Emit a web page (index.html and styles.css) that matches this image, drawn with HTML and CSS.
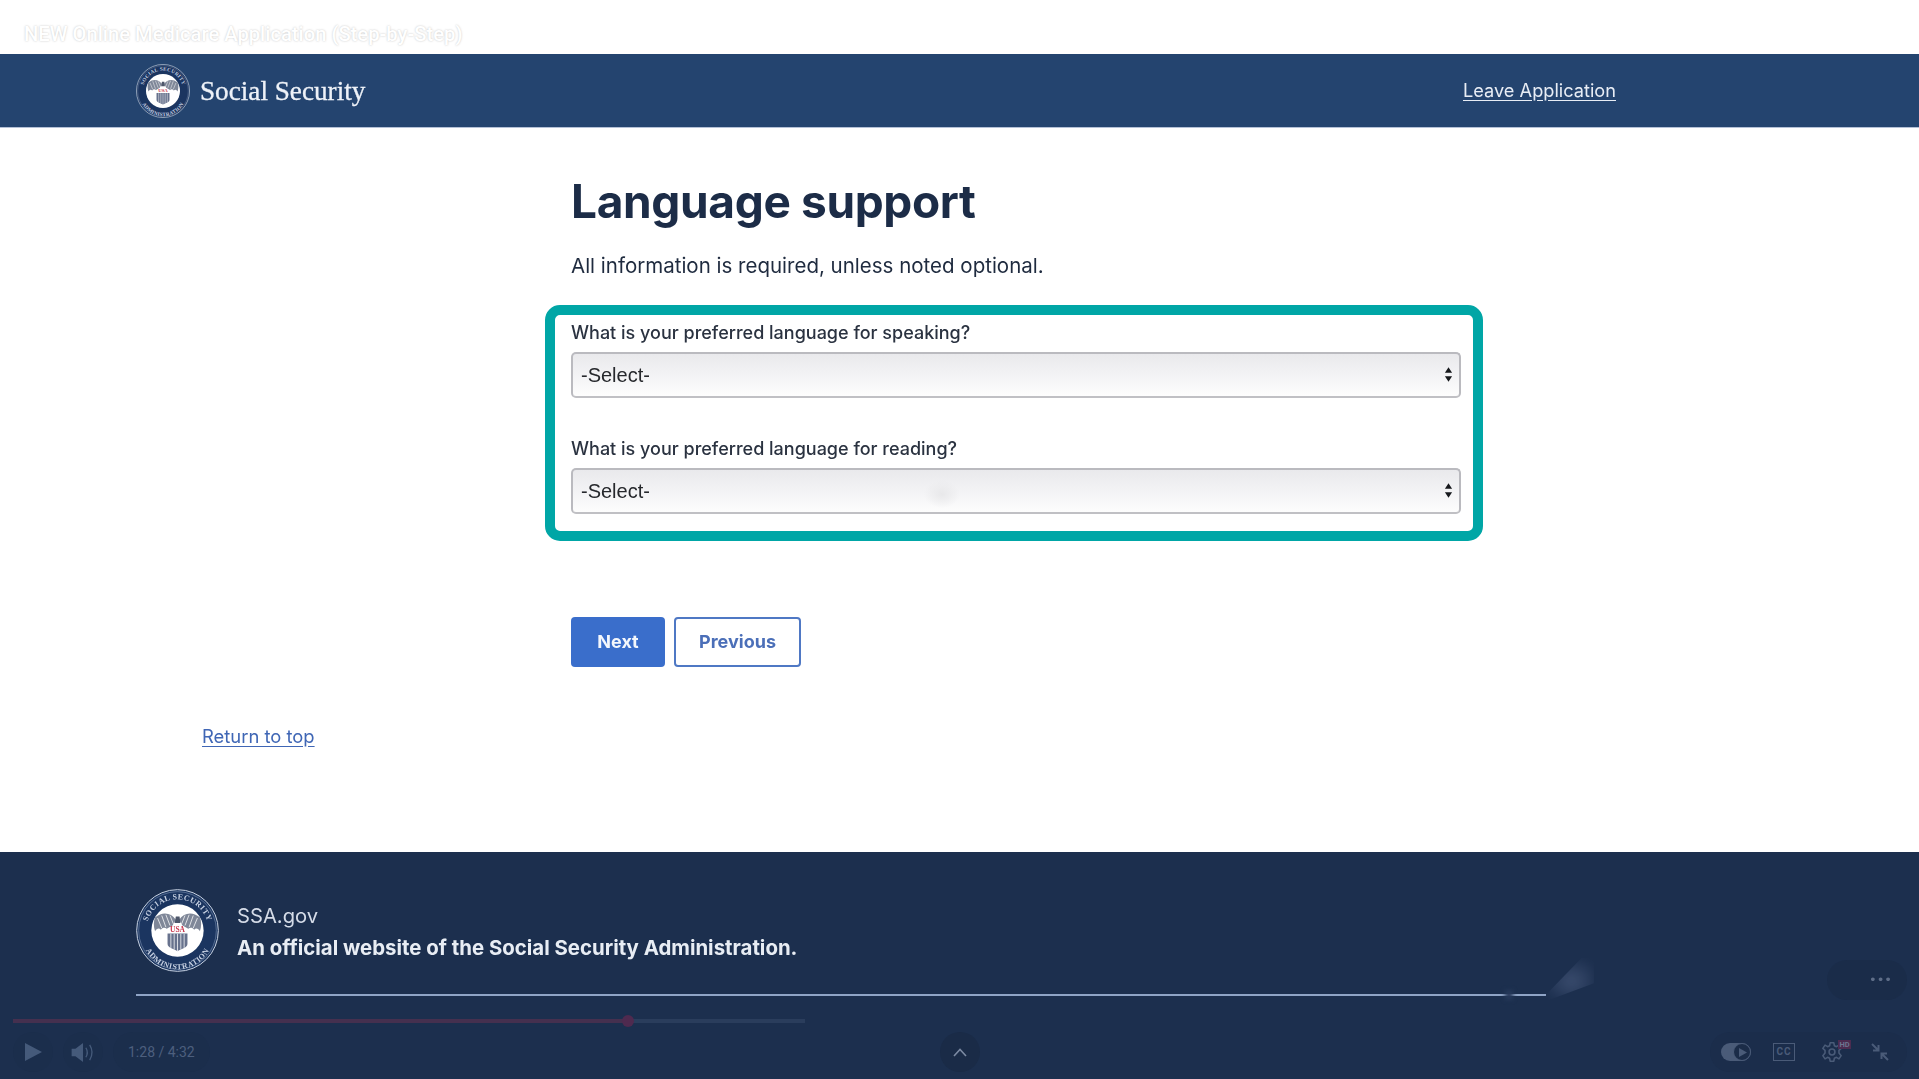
FILE: index.html
```html
<!DOCTYPE html>
<html lang="en">
<head>
<meta charset="utf-8">
<title>Language support</title>
<link rel="stylesheet" href="styles.css">
</head>
<body>
<svg class="defs" width="0" height="0" aria-hidden="true">
  <defs>
    <path id="arc-top" d="M13 56 A37.5 37.5 0 1 1 87 56"/>
    <path id="arc-bottom" d="M8 42 A43.5 43.5 0 1 0 92 42"/>
    <symbol id="seal" viewBox="0 0 100 100">
      <circle cx="50" cy="50" r="49.2" fill="#1b3560" stroke="#c9d3e2" stroke-width="1.2"/>
      <circle cx="50" cy="50" r="46.8" fill="none" stroke="#8ea2c0" stroke-width=".6"/>
      <text class="seal-ring"><textPath href="#arc-top" startOffset="50%" text-anchor="middle">SOCIAL SECURITY</textPath></text>
      <text class="seal-ring"><textPath href="#arc-bottom" startOffset="50%" text-anchor="middle">ADMINISTRATION</textPath></text>
      <circle cx="50" cy="50" r="31.5" fill="#fff"/>
      <path d="M48 37 C42 28 32 27 23 34 C21 39 21 45 23 51 C25 47 28 47 30 49 C32 46 35 46 37 48 L44 44 Z" fill="#7f8798"/>
      <path d="M52 37 C58 28 68 27 77 34 C79 39 79 45 77 51 C75 47 72 47 70 49 C68 46 65 46 63 48 L56 44 Z" fill="#7f8798"/>
      <path d="M26 35 L31 47 M31 32 L36 46 M36 31 L41 44 M41 32 L45 42 M74 35 L69 47 M69 32 L64 46 M64 31 L59 44 M59 32 L55 42" stroke="#fff" stroke-width=".9"/>
      <path d="M46.5 41 L53.5 41 L52.5 33 L48 33 Z" fill="#4d566a"/>
      <text class="seal-usa" x="50" y="52" text-anchor="middle">USA</text>
      <path d="M38 53.500 H62 V66 C62 71 55 72 50 75 C45 72 38 71 38 66 Z" fill="#67728d"/>
      <path d="M42 54 V71 M46 54 V73 M50 54 V75 M54 54 V73 M58 54 V71" stroke="#fff" stroke-width=".9"/>
    </symbol>
  </defs>
</svg>

<div class="page">
  <div class="video-title-bar">
    <span class="video-title">NEW Online Medicare Application (Step-by-Step)</span>
  </div>

  <header class="site-header">
    <a class="brand" href="#">
      <svg class="brand-seal" aria-hidden="true"><use href="#seal"/></svg>
      <span class="brand-name">Social Security</span>
    </a>
    <a class="leave-link" href="#">Leave Application</a>
  </header>

  <main class="content">
    <div class="form-col">
      <h1 class="title">Language support</h1>
      <p class="intro">All information is required, unless noted optional.</p>

      <form class="highlight-box">
        <label class="field-label" for="speak">What is your preferred language for speaking?</label>
        <div class="select-wrap">
          <select class="field-select" id="speak"><option>-Select-</option></select>
          <svg class="select-arrows" viewBox="0 0 10 16" aria-hidden="true"><path d="M5 0 L9 6 H1 Z M1 10 H9 L5 16 Z"/></svg>
        </div>

        <label class="field-label field-label-second" for="read">What is your preferred language for reading?</label>
        <div class="select-wrap">
          <select class="field-select field-select-smudged" id="read"><option>-Select-</option></select>
          <svg class="select-arrows" viewBox="0 0 10 16" aria-hidden="true"><path d="M5 0 L9 6 H1 Z M1 10 H9 L5 16 Z"/></svg>
        </div>
      </form>

      <div class="actions">
        <button class="btn btn-primary" type="button">Next</button>
        <button class="btn btn-outline" type="button">Previous</button>
      </div>
    </div>

    <a class="return-top" href="#">Return to top</a>
  </main>

  <footer class="site-footer">
    <div class="footer-id">
      <svg class="footer-seal" aria-hidden="true"><use href="#seal"/></svg>
      <div class="footer-text">
        <div class="footer-site">SSA.gov</div>
        <div class="footer-desc">An official website of the Social Security Administration.</div>
      </div>
    </div>
    <div class="footer-rule"></div>
  </footer>

  <div class="player-overlay">
    <div class="glow"></div>
    <div class="rule-knot"></div>
    <div class="more-pill"><span class="more-dots">•••</span></div>

    <div class="progress">
      <div class="progress-played"></div>
      <div class="progress-knob"></div>
    </div>

    <div class="controls">
      <div class="controls-left">
        <span class="ctrl-btn">
          <svg class="ico-play" viewBox="0 0 17 18"><path d="M0 0 L17 9 L0 18 Z"/></svg>
        </span>
        <span class="ctrl-btn">
          <svg class="ico-vol" viewBox="0 0 25 20"><path class="fill" d="M0 6 H4 L12 0 V20 L4 14 H0 Z"/><path class="line" d="M15 5 Q18 10 15 15 M19 2 Q24 10 19 18"/></svg>
        </span>
        <span class="ctrl-time">1:28 / 4:32</span>
      </div>

      <span class="ctrl-up">
        <svg class="ico-up" viewBox="0 0 14 9"><path d="M1 8 L7 1.5 L13 8"/></svg>
      </span>

      <div class="controls-right">
        <span class="toggle"><span class="toggle-knob"><svg class="ico-toggle" viewBox="0 0 8 9"><path d="M0 0 L8 4.5 L0 9 Z"/></svg></span></span>
        <span class="cc">CC</span>
        <span class="gear-wrap">
          <svg class="ico-gear" viewBox="0 0 24 24"><path d="M10 2 H14 L14.6 5.2 L16.8 6.2 L19.6 4.5 L22 8 L19.6 10.2 V13 L22 16 L19.6 19.5 L16.8 17.8 L14.6 18.8 L14 22 H10 L9.4 18.8 L7.2 17.8 L4.4 19.5 L2 16 L4.4 13 V10.2 L2 8 L4.4 4.5 L7.2 6.2 L9.4 5.2 Z"/><circle cx="12" cy="12" r="3.2"/></svg>
          <span class="hd">HD</span>
        </span>
        <svg class="ico-shrink" viewBox="0 0 18 18"><path d="M1 1 L7.5 7.5 M7.5 2 V7.5 H2 M17 17 L10.5 10.5 M10.5 16 V10.5 H16"/></svg>
      </div>
    </div>
  </div>
</div>
</body>
</html>
```
FILE: styles.css
```css
* { box-sizing: border-box; }
html, body { margin: 0; padding: 0; background: #fff; }
.defs { position: absolute; }

.page {
  position: relative;
  display: flex;
  flex-direction: column;
  height: 1079px;
  overflow: hidden;
  font-family: Inter, "Liberation Sans", sans-serif;
  color: #1b2b45;
  filter: blur(.45px);
}

.video-title-bar { height: 54px; padding: 22px 0 0 24px; background: #fff; }
.video-title {
  display: block;
  font: 500 20.2px/24px Roboto, sans-serif;
  color: #fff;
  text-shadow: 0 0 2px rgba(120,120,120,.45);
}

.site-header {
  height: 74px;
  display: flex;
  align-items: center;
  justify-content: space-between;
  padding: 0 303px 0 136px;
  background: #24446f;
  border-bottom: 1px solid #b4c0d6;
}
.brand { display: flex; align-items: center; gap: 10px; text-decoration: none; }
.brand-seal { width: 54px; height: 54px; }
.brand-name { font: 400 27.2px/30px "Liberation Serif", serif; color: #eef2f8; -webkit-text-stroke: .3px #eef2f8; }
.leave-link { font-size: 18.2px; line-height: 22px; padding-bottom: 2px; color: #e8edf5; text-decoration: underline; text-underline-offset: 3px; }

.seal-ring { font: 700 9.6px "Liberation Serif", serif; fill: #c7d1e2; letter-spacing: .5px; }
.seal-usa { font: 700 9px "Liberation Serif", serif; fill: #c6324a; }

.content { flex: 1; }
.form-col { margin-left: 571px; width: 890px; }
.title { margin: 45px 0 0; font-size: 46px; line-height: 56px; font-weight: 700; letter-spacing: -.35px; color: #1c2c47; }
.intro { margin: 22px 0 0; font-size: 20.5px; line-height: 30px; color: #1f2b3f; }

.highlight-box {
  margin: 24px 0 0 -26px;
  width: 938px;
  height: 236px;
  padding: 6px 12px 0 16px;
  border: 10px solid #00a6a6;
  border-radius: 15px;
  background: #fff;
}
.field-label { display: block; font-size: 18px; line-height: 24px; font-weight: 500; color: #2a3240; margin-bottom: 7px; }
.field-label-second { margin-top: 39px; }
.select-wrap { position: relative; height: 46px; }
.field-select {
  appearance: none;
  -webkit-appearance: none;
  width: 100%;
  height: 46px;
  padding: 0 0 1px 8px;
  border: 2px solid #bababf;
  border-bottom-color: #c0c0c4;
  border-radius: 5px;
  background: linear-gradient(#e9e9ec, #f2f2f4 45%, #fdfdfd);
  font: 400 20px "Liberation Sans", sans-serif;
  color: #26282c;
}
.field-select-smudged {
  background: radial-gradient(ellipse 18px 14px at 369px 24px, #e8e8ea, rgba(232,232,234,0)), linear-gradient(#e9e9ec, #f2f2f4 45%, #fdfdfd);
}
.select-arrows { position: absolute; top: 15px; right: 8px; width: 9px; height: 15px; fill: #16181c; }

.actions { display: flex; gap: 9px; margin-top: 76px; }
.btn {
  height: 50px;
  padding-bottom: 2px;
  border-radius: 4px;
  font: 700 18px Inter, sans-serif;
}
.btn-primary { width: 94px; border: 0; background: #3a6ecb; color: #f4f7fc; }
.btn-outline { width: 127px; border: 2px solid #4f78c4; background: #fff; color: #4b6fb8; }

.return-top { display: inline-block; margin: 57px 0 0 202px; font-size: 18.4px; line-height: 24px; color: #3f66b5; text-decoration: underline; text-underline-offset: 3px; }

.site-footer { height: 227px; padding: 37px 0 0 136px; background: #1c2f4e; color: #e8edf4; }
.footer-id { display: flex; align-items: center; gap: 18px; height: 83px; }
.footer-seal { width: 83px; height: 83px; }
.footer-text { display: flex; flex-direction: column; gap: 8px; padding-top: 2px; }
.footer-site { font-size: 20.2px; line-height: 24px; color: #d5dce8; }
.footer-desc { font-size: 20.4px; line-height: 24px; font-weight: 700; }
.footer-rule { margin-top: 22px; width: 1410px; height: 2px; background: #8fa4c6; }

.player-overlay { position: absolute; left: 0; right: 0; top: 950px; bottom: 0; }
.glow {
  position: absolute; left: 1544px; top: 8px; width: 50px; height: 42px;
  background: radial-gradient(ellipse at 55% 55%, rgba(70,88,122,.75), rgba(52,70,104,.45) 50%, rgba(40,58,90,0) 78%);
  clip-path: polygon(0 92%, 75% 0, 100% 0, 100% 60%, 10% 100%);
  filter: blur(5px);
}
.rule-knot { position: absolute; left: 1505px; top: 40px; width: 8px; height: 10px; background: #26395a; filter: blur(2px); }
.more-pill { position: absolute; left: 1827px; top: 10px; width: 80px; height: 40px; border-radius: 20px; background: #1a2c49; }
.more-dots { position: absolute; left: 42px; top: 10px; font: 13px/20px "DejaVu Sans", sans-serif; color: #5f6e88; letter-spacing: 0; }

.progress { position: absolute; left: 13px; top: 69px; width: 792px; height: 4px; background: #2a3d5c; }
.progress-played { width: 615px; height: 4px; background: #45304f; }
.progress-knob { position: absolute; left: 609px; top: -4px; width: 12px; height: 12px; border-radius: 50%; background: #4f2a4f; }

.controls {
  position: absolute; left: 13px; right: 12px; top: 82px; height: 40px;
  display: flex; align-items: center;
}
.controls-left { display: flex; align-items: center; gap: 10px; flex: 0 0 927px; }
.ctrl-btn { width: 40px; height: 40px; border-radius: 20px; background: #1b2e4c; display: flex; align-items: center; justify-content: center; }
.ico-play { width: 17px; height: 18px; fill: #455a7a; }
.ico-vol { width: 25px; height: 19px; }
.ico-vol .fill { fill: #455a7a; }
.ico-vol .line { fill: none; stroke: #455a7a; stroke-width: 1.4; }
.ctrl-time { padding: 0 15px; height: 40px; border-radius: 20px; background: #1b2e4c; font: 400 14px/40px Roboto, sans-serif; color: #4d5f7e; }

.ctrl-up { width: 40px; height: 40px; border-radius: 20px; background: #1a2b47; display: flex; align-items: center; justify-content: center; flex: none; }
.ico-up { width: 14px; height: 9px; fill: none; stroke: #7c8aa3; stroke-width: 1.6; }

.controls-right {
  width: 197px; height: 40px; margin-left: auto; border-radius: 20px; background: #1b2d4b;
  display: flex; align-items: center; padding-left: 11px; position: relative;
}
.toggle { width: 30px; height: 18px; border-radius: 9px; background: #4a5b78; display: block; position: relative; }
.toggle-knob { position: absolute; right: 0; top: 0; width: 18px; height: 18px; border-radius: 50%; background: #1b2c48; border: 1.5px solid #4a5b78; display: flex; align-items: center; justify-content: center; }
.ico-toggle { width: 8px; height: 9px; fill: #4a5b78; margin-left: 1px; }
.cc { margin-left: 22px; width: 22px; height: 18px; border: 1.5px solid #4a5b78; font: 700 10px/15px Roboto, sans-serif; color: #4a5b78; text-align: center; letter-spacing: 1px; }
.gear-wrap { margin-left: 26px; position: relative; width: 22px; height: 22px; display: block; }
.ico-gear { width: 22px; height: 22px; fill: none; stroke: #4a5b78; stroke-width: 1.7; stroke-linejoin: round; }
.hd { position: absolute; left: 17px; top: -1px; width: 13px; height: 9px; background: #4c2c50; font: 700 7.5px/9px Roboto, sans-serif; color: #6d7690; text-align: center; }
.ico-shrink { width: 18px; height: 18px; margin-left: 28px; fill: none; stroke: #4a5b78; stroke-width: 2; }
```
